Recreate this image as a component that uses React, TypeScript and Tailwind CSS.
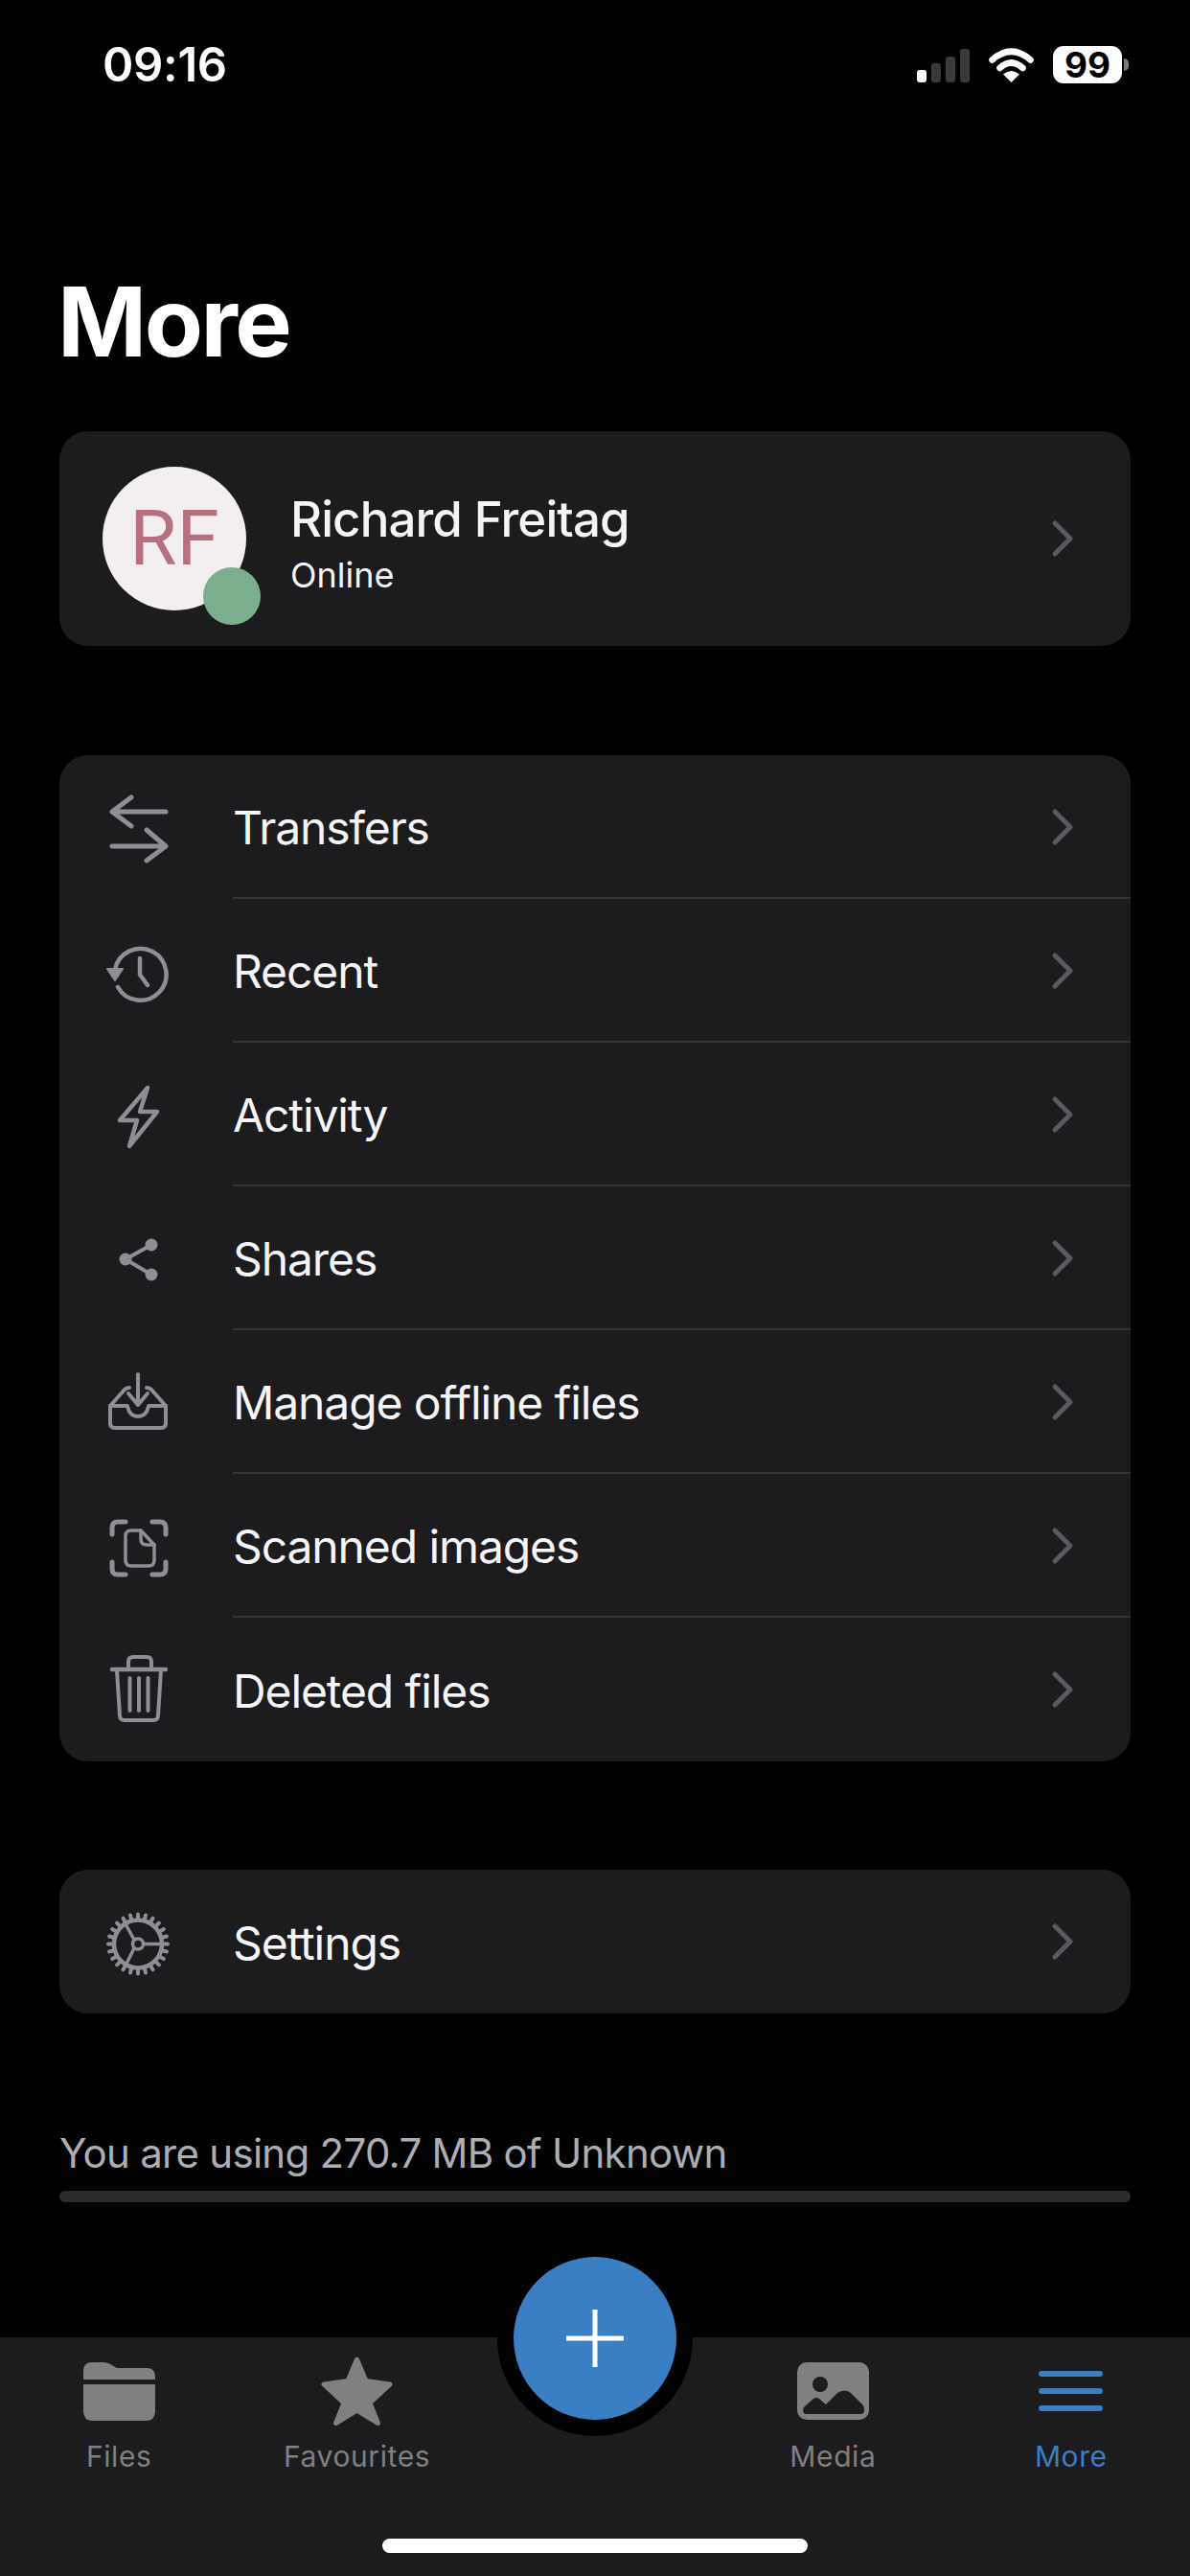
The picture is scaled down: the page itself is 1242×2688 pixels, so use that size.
import React from "react";

const G = "#8e8e93";

const Chevron = () => (
  <svg width="26" height="40" viewBox="0 0 26 40" fill="none" stroke="#5a5a5e" strokeWidth="5" strokeLinecap="round" strokeLinejoin="round" className="shrink-0">
    <path d="M5 4 L21 20 L5 36" />
  </svg>
);

const Ico = ({ children }: { children: React.ReactNode }) => (
  <svg width="90" height="90" viewBox="0 0 90 90" fill="none" stroke={G} strokeWidth="5" strokeLinecap="round" strokeLinejoin="round" className="shrink-0">
    {children}
  </svg>
);

const teeth = Array.from({ length: 24 }, (_, i) => (i * Math.PI * 2) / 24);

const rows: { label: string; icon: React.ReactNode }[] = [
  {
    label: "Transfers",
    icon: (
      <Ico>
        <path d="M73 29 H17 M37 14 L17 29 L37 44" />
        <path d="M17 65 H73 M53 48 L73 65 L53 80" />
      </Ico>
    ),
  },
  {
    label: "Recent",
    icon: (
      <Ico>
        <path d="M20 44 A27 27 0 1 1 23 62" strokeWidth="4.5" />
        <path d="M12 43 H28 L20 55 Z" fill={G} strokeWidth="2" />
        <path d="M46 32 V49 L54 60" strokeWidth="4.5" />
      </Ico>
    ),
  },
  {
    label: "Activity",
    icon: (
      <Ico>
        <path d="M54 17 L25 51 H43 L35 78 L64 42 H46 Z" strokeWidth="4.5" />
      </Ico>
    ),
  },
  {
    label: "Shares",
    icon: (
      <Ico>
        <path d="M58 31 L31 46 L58 62" strokeWidth="4" />
        <circle cx="58" cy="31" r="6.5" fill={G} stroke="none" />
        <circle cx="31" cy="46" r="6.5" fill={G} stroke="none" />
        <circle cx="58" cy="62" r="6.5" fill={G} stroke="none" />
      </Ico>
    ),
  },
  {
    label: "Manage offline files",
    icon: (
      <Ico>
        <path d="M15 49 V67 Q15 72 20 72 H68 Q73 72 73 67 V49" strokeWidth="4" />
        <path d="M15 49 H33 Q35 60 44 60 Q53 60 55 49 H73" strokeWidth="4" />
        <path d="M15 49 L30 32 Q32 30 35 30 M73 49 L58 32 Q56 30 53 30" strokeWidth="4" />
        <path d="M44 16 V48 M34 36 L44 48 L54 36" strokeWidth="4" />
      </Ico>
    ),
  },
  {
    label: "Scanned images",
    icon: (
      <Ico>
        <path d="M17 33 V26 Q17 20 23 20 H31 M59 20 H67 Q73 20 73 26 V33 M73 62 V69 Q73 75 67 75 H59 M31 75 H23 Q17 75 17 69 V62" />
        <path d="M37 29 H47 L61 44 V60 Q61 66 55 66 H37 Q31 66 31 60 V35 Q31 29 37 29 Z" strokeWidth="3.5" />
        <path d="M47 29 V38 Q47 44 53 44 H61" strokeWidth="3.5" />
      </Ico>
    ),
  },
  {
    label: "Deleted files",
    icon: (
      <Ico>
        <path d="M17 24 H73" strokeWidth="4.5" />
        <path d="M34 23 V16 Q34 11 39 11 H53 Q58 11 58 16 V23" strokeWidth="4" />
        <path d="M22 25 L25 72 Q25 77 30 77 H60 Q65 77 65 72 L68 25" strokeWidth="4" />
        <path d="M35.5 33 V67 M45 33 V67 M54.5 33 V67" strokeWidth="4" />
      </Ico>
    ),
  },
];

const Row = ({ label, icon, last }: { label: string; icon: React.ReactNode; last?: boolean }) => (
  <div className="flex h-[150px] items-center pl-[38px]">
    {icon}
    <div className={`ml-[53px] flex h-full min-w-0 flex-1 items-center justify-between pr-[58px] ${last ? "" : "border-b-2 border-[#343436]"}`}>
      <span className="pt-[3px] text-[48px] leading-[60px] tracking-[-1.1px] text-[#f5f5f7]">{label}</span>
      <div className={`flex ${last ? "" : "pt-[2px]"}`}>
        <Chevron />
      </div>
    </div>
  </div>
);

const Tab = ({ label, icon, active }: { label: string; icon?: React.ReactNode; active?: boolean }) => (
  <div className="flex flex-col items-center pt-[16px]">
    <div className="flex h-[80px] items-center justify-center">{icon}</div>
    <span className={`mt-[8px] text-[30px] leading-[40px] tracking-[0.6px] ${active ? "text-[#3a7fc4]" : "text-[#808080]"}`}>{label}</span>
  </div>
);

export default function App() {
  return (
    <div className="flex h-[2688px] w-[1242px] flex-col overflow-hidden bg-black font-['Inter','Liberation_Sans',sans-serif] text-white">
      {/* status bar */}
      <div className="relative flex h-[136px] items-start justify-between pl-[107px] pr-[64px] pt-[39px]">
        <span className="text-[49px] font-semibold leading-[58px] tracking-[-0.3px]">09:16</span>
        <div className="flex items-center pt-[9px]">
          <div className="flex h-[36px] items-end gap-[5px]">
            <div className="h-[13px] w-[10px] rounded-[3px] bg-white" />
            <div className="h-[20px] w-[10px] rounded-[3px] bg-[#3a3a3c]" />
            <div className="h-[27px] w-[10px] rounded-[3px] bg-[#3a3a3c]" />
            <div className="h-[35px] w-[10px] rounded-[3px] bg-[#3a3a3c]" />
          </div>
          <svg width="47" height="36" viewBox="0 0 47 36" className="ml-[20px]" fill="none" stroke="white" strokeWidth="6.5" strokeLinecap="round">
            <path d="M3.5 12.5 Q23.5 -5 43.5 12.5" />
            <path d="M11.5 21 Q23.5 10 35.5 21" />
            <path d="M23.5 36 L15 27.5 Q23.5 20.5 32 27.5 Z" fill="white" stroke="none" />
          </svg>
          <div className="ml-[20px] flex h-[39px] w-[72px] items-center justify-center rounded-[11px] bg-white text-[37px] font-bold leading-none text-black">
            99
          </div>
          <div className="ml-[2px] h-[13px] w-[5px] rounded-r-full bg-[#7a7a7a]" />
        </div>
      </div>

      {/* title */}
      <h1 className="mb-[64px] ml-[60px] mt-[150px] text-[100px] font-bold leading-[100px] tracking-[-2.5px]">More</h1>

      {/* profile */}
      <div className="mx-[62px] flex h-[224px] items-center rounded-[30px] bg-[#1c1c1e] pl-[45px] pr-[58px]">
        <div className="relative h-[150px] w-[150px] shrink-0">
          <div className="flex h-full w-full items-center justify-center rounded-full bg-[#f3eef0] font-['Roboto',sans-serif] text-[80px] leading-none text-[#b8707f]">
            RF
          </div>
          <div className="absolute left-[105px] top-[105px] h-[60px] w-[60px] rounded-full bg-[#7bae8c]" />
        </div>
        <div className="ml-[46px] flex flex-1 flex-col pt-[8px]">
          <span className="text-[51px] font-medium leading-[62px] tracking-[-0.9px] text-[#f5f5f7]">Richard Freitag</span>
          <span className="mt-[5px] text-[36px] leading-[44px] text-[#f5f5f7]">Online</span>
        </div>
        <Chevron />
      </div>

      {/* menu */}
      <div className="mx-[62px] mt-[114px] overflow-hidden rounded-[30px] bg-[#1c1c1e]">
        {rows.map((r, i) => (
          <Row key={r.label} label={r.label} icon={r.icon} last={i === rows.length - 1} />
        ))}
      </div>

      {/* settings */}
      <div className="mx-[62px] mt-[113px] overflow-hidden rounded-[30px] bg-[#1c1c1e]">
        <Row
          label="Settings"
          last
          icon={
            <Ico>
              <circle cx="44" cy="47.5" r="25" strokeWidth="4.5" />
              {teeth.map((a, i) => (
                <line
                  key={i}
                  x1={44 + 26 * Math.cos(a)}
                  y1={47.5 + 26 * Math.sin(a)}
                  x2={44 + 31 * Math.cos(a)}
                  y2={47.5 + 31 * Math.sin(a)}
                  strokeWidth="4"
                />
              ))}
              <circle cx="44" cy="47.5" r="5.5" strokeWidth="3.5" />
              <path d="M50 47.5 H69 M40 43 L30 25 M40 52 L32 68" strokeWidth="3.5" />
            </Ico>
          }
        />
      </div>

      {/* usage */}
      <p className="mx-[62px] mt-[121px] text-[42px] leading-[50px] tracking-[-0.72px] text-[#aeaeb2]">You are using 270.7 MB of Unknown</p>
      <div className="mx-[62px] mt-[14px] h-[12px] rounded-full bg-[#2c2c2e]" />

      {/* tab bar */}
      <div className="relative mt-auto h-[249px] bg-[#1c1c1e]">
        <div className="absolute left-[519px] top-[-101px] flex h-[204px] w-[204px] items-center justify-center rounded-full bg-black">
          <div className="flex h-[170px] w-[170px] items-center justify-center rounded-full bg-[#3a7fc4]">
            <svg width="60" height="60" viewBox="0 0 60 60" stroke="white" strokeWidth="5">
              <path d="M30 0 V60 M0 30 H60" />
            </svg>
          </div>
        </div>
        <div className="grid h-[210px] grid-cols-5">
          <Tab
            label="Files"
            icon={
              <svg width="75" height="61" viewBox="0 0 75 61" fill="#808080">
                <path d="M0 17 V9 Q0 0 9 0 H20 Q26 0 30 3 L35 6 H66 Q75 6 75 15 V18 H0 Z" />
                <path d="M0 23 H75 V51 Q75 61 65 61 H10 Q0 61 0 51 Z" />
              </svg>
            }
          />
          <Tab
            label="Favourites"
            icon={
              <svg width="75" height="73" viewBox="0 0 75 73" fill="#808080" stroke="#808080" strokeWidth="5" strokeLinejoin="round">
                <path d="M37.5 3 L47 25.5 L72 29 L51 48.5 L59.5 69.5 L37.5 56 L15.5 69.5 L24 48.5 L3 29 L28 25.5 Z" />
              </svg>
            }
          />
          <div />
          <Tab
            label="Media"
            icon={
              <svg width="75" height="60" viewBox="0 0 75 60">
                <rect width="75" height="60" rx="10" fill="#808080" />
                <circle cx="24" cy="23" r="8" fill="#1c1c1e" />
                <path d="M6 50 Q6 47 9 45 L17 38 Q20 36 23 38 L30 44 L42 32 Q50 27 56 32 L68 44 Q70 46 70 50 Q70 54 66 54 H10 Q6 54 6 50 Z" fill="#1c1c1e" />
              </svg>
            }
          />
          <Tab
            label="More"
            active
            icon={
              <div className="flex w-[67px] flex-col gap-[12px]">
                <div className="h-[6px] rounded-full bg-[#3a7fc4]" />
                <div className="h-[6px] rounded-full bg-[#3a7fc4]" />
                <div className="h-[6px] rounded-full bg-[#3a7fc4]" />
              </div>
            }
          />
        </div>
        <div className="mx-auto h-[15px] w-[444px] rounded-full bg-white" />
      </div>
    </div>
  );
}
